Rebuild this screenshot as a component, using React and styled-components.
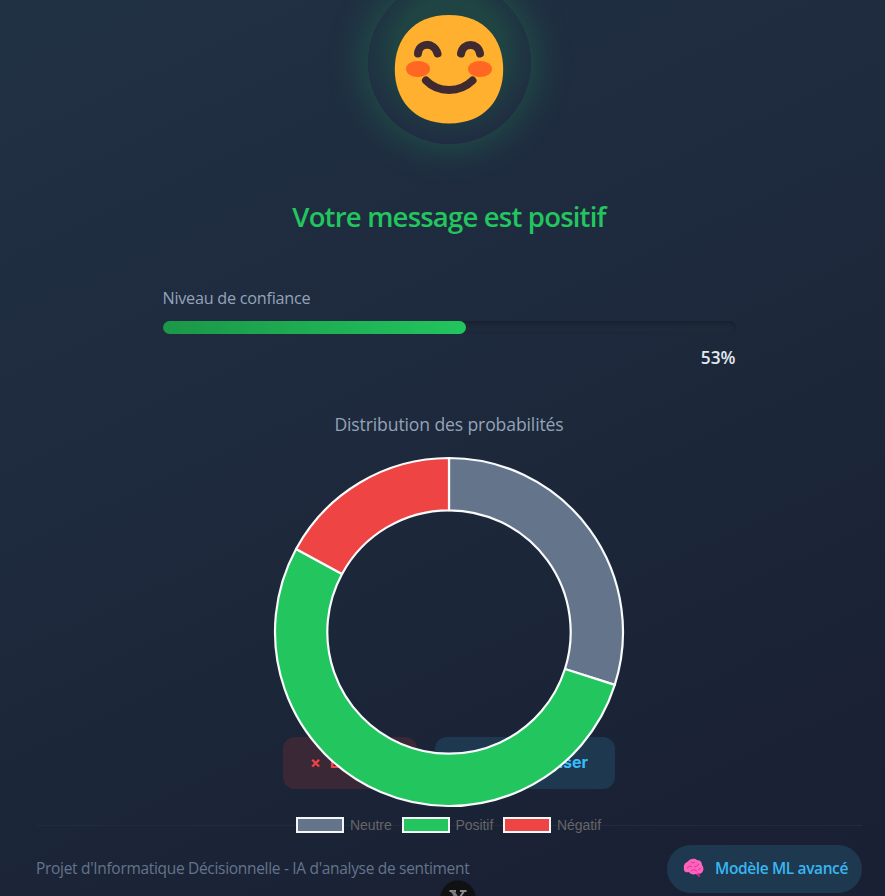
import React from 'react';
import styled, { createGlobalStyle } from 'styled-components';

const Global = createGlobalStyle`
  * { box-sizing: border-box; }
  html, body { margin: 0; }
  body { width: 885px; height: 896px; overflow: hidden; background: #1a2033; font-family: "Open Sans", "Noto Sans", sans-serif; }
`;
const Page = styled.main`
  height: 896px;
  overflow: hidden;
  display: flex;
  flex-direction: column;
  padding: 0 23px 0 36px;
  background: linear-gradient(155deg, #213144 0%, #1f2c40 30%, #1c2639 62%, #1a2135 85%, #192033 100%);
`;
const Halo = styled.div`
  width: 163px;
  height: 163px;
  flex: none;
  margin: -19px auto 0;
  border-radius: 50%;
  box-shadow: 0 0 40px rgba(34, 197, 94, .3);
`;
const Face = styled.svg`
  display: block;
  width: 163px;
  height: 163px;
  border-radius: 50%;
`;
const Title = styled.h1`
  flex: none;
  margin: 53px auto 0;
  height: 40px;
  line-height: 40px;
  font-size: 27.5px;
  font-weight: 600;
  letter-spacing: -0.8px;
  white-space: nowrap;
  color: #22c55e;
`;
const Confidence = styled.section`
  flex: none;
  width: 573px;
  margin: 48px auto 0;
`;
const Label = styled.div`
  height: 26px;
  line-height: 26px;
  font-size: 16.2px;
  letter-spacing: -0.25px;
  color: #94a3b8;
`;
const Track = styled.div`
  height: 13px;
  margin-top: 10px;
  border-radius: 7px;
  background: #1e293a;
  box-shadow: inset 0 2px 4px rgba(0, 0, 0, .25);
`;
const Fill = styled.div`
  height: 13px;
  border-radius: 7px;
  background: linear-gradient(90deg, #1b9748, #22c55e);
`;
const Percent = styled.div`
  margin-top: 11px;
  height: 26px;
  line-height: 26px;
  text-align: right;
  font-size: 17.3px;
  font-weight: 600;
  color: #e2e8f0;
`;
const ChartTitle = styled.h2`
  flex: none;
  margin: 41px auto 0;
  height: 26px;
  line-height: 24px;
  font-size: 17.6px;
  font-weight: 400;
  letter-spacing: -0.13px;
  white-space: nowrap;
  color: #94a3b8;
`;
const ChartArea = styled.div`
  position: relative;
  flex: none;
  height: 299px;
`;
const Chart = styled.svg`
  position: absolute;
  z-index: 1;
  left: 237px;
  top: 18px;
  width: 352px;
  height: 352px;
`;
const Legend = styled.div`
  position: absolute;
  z-index: 1;
  top: 378px;
  left: 260px;
  display: flex;
  gap: 8px;
`;
const LegendItem = styled.div`
  display: flex;
  align-items: center;
  gap: 6px;
  width: ${p => p.$width}px;
  height: 18px;
  font: 14px "Liberation Sans", Arial, sans-serif;
  letter-spacing: -0.05px;
  color: #666;
  white-space: nowrap;
`;
const Swatch = styled.span`
  flex: none;
  width: 48px;
  height: 16px;
  border: 2px solid #f4f6f8;
  background: ${p => p.$color};
`;
const Actions = styled.div`
  flex: none;
  display: flex;
  justify-content: center;
  gap: 18px;
`;
const Button = styled.button`
  width: ${p => p.$width}px;
  height: 52px;
  display: flex;
  align-items: center;
  justify-content: ${p => p.$justify};
  gap: 9px;
  padding: 0 27px 2px;
  border: 0;
  border-radius: 12px;
  font: 700 16px Inter, sans-serif;
  white-space: nowrap;
  color: ${p => p.$color};
  background: ${p => p.$bg};
`;
const Footer = styled.footer`
  flex: none;
  height: 80px;
  margin-top: 36px;
  padding-top: 19px;
  display: flex;
  justify-content: space-between;
  border-top: 1px solid #222b3d;
`;
const Credit = styled.span`
  height: 48px;
  line-height: 46px;
  font-size: 15.5px;
  letter-spacing: -0.31px;
  white-space: nowrap;
  color: #64748b;
`;
const Badge = styled.div`
  width: 195px;
  height: 48px;
  padding: 0 0 2px 16px;
  display: flex;
  align-items: center;
  gap: 11px;
  border-radius: 24px;
  background: #1e3850;
  color: #38b6f0;
  font-size: 15.5px;
  font-weight: 600;
  letter-spacing: -0.38px;
  white-space: nowrap;
`;
const Bubble = styled.svg`
  position: absolute;
  left: 439px;
  top: 879px;
  width: 38px;
  height: 17px;
`;

const slices = [
  ['Neutre', '#64748b', 0, 107.7, 97.5],
  ['Positif', '#22c55e', 107.7, 298.5, 93.5],
  ['Négatif', '#ef4444', 298.5, 360, 100],
];
const point = (r, deg) => {
  const a = (deg * Math.PI) / 180;
  return `${176 + r * Math.sin(a)} ${176 - r * Math.cos(a)}`;
};
const arc = (from, to) => {
  const large = to - from > 180 ? 1 : 0;
  return `M${point(174, from)}A174 174 0 ${large} 1 ${point(174, to)}L${point(121.7, to)}A121.7 121.7 0 ${large} 0 ${point(121.7, from)}Z`;
};

function Smiley() {
  return (
    <Face viewBox="0 0 163 163">
      <defs>
        <radialGradient id="glow" cx="50%" cy="44%" r="56%">
          <stop offset=".58" stopColor="#1f4443" />
          <stop offset=".78" stopColor="#1f3742" />
          <stop offset="1" stopColor="#202c42" />
        </radialGradient>
      </defs>
      <circle cx="81.500" cy="81.500" r="81.500" fill="url(#glow)" />
      <path d="M81 142.500C117 142.500 135.200 118.200 135.200 88.300S117 34 81 34 26.800 58.400 26.800 88.300 45 142.500 81 142.500Z" fill="#ffb02e" />
      <ellipse cx="50" cy="88" rx="12" ry="8" fill="#ff6723" />
      <ellipse cx="112" cy="88" rx="12" ry="8" fill="#ff6723" />
      <path d="M50 72.500C51 61.500 66 60.500 69.500 72.500M93 72.500C95 61 110 61 112 72.500M58 99.500C70 112 92 112 104.500 99.500" fill="none" stroke="#402a32" strokeWidth="8" strokeLinecap="round" />
    </Face>
  );
}
function Brain() {
  return (
    <svg width="21" height="20" viewBox="0 0 21 20">
      <path d="M1 10C0 7 3 4 5 3.500 7 0 12 0 14 2 18 2 19 5 19 7 22 11 20 15 16 16L16.500 19 13 16C10 17 7 16 6 14 3 15 0 13 1 10Z" fill="#ff64bd" />
      <path d="M4 10Q6 7 9 9M8 4Q10 6 12 4M11 9Q14 9 16 6M8 13Q11 10 14 13M15 12L18 10" fill="none" stroke="#e51c93" strokeWidth=".8" />
      <path d="M13 16L16.500 19V15Z" fill="#f50f98" />
    </svg>
  );
}
function Close() {
  return (
    <Bubble viewBox="0 0 38 17">
      <circle cx="19" cy="19" r="18" fill="#151820" />
      <circle cx="19" cy="19" r="17" fill="#101112" />
      <path d="M10.500 12H17M21 12H27.500M13 12L22 26M25 12L16 26" fill="none" stroke="#8b8b8b" strokeWidth="2" />
      <path d="M13.500 12L22.500 26" stroke="#777" strokeWidth="3.500" />
    </Bubble>
  );
}

export default function App() {
  return (
    <>
      <Global />
      <Page>
        <Halo><Smiley /></Halo>
        <Title>Votre message est positif</Title>
        <Confidence>
          <Label>Niveau de confiance</Label>
          <Track><Fill style={{ width: '53%' }} /></Track>
          <Percent>53%</Percent>
        </Confidence>
        <ChartTitle>Distribution des probabilités</ChartTitle>
        <ChartArea>
          <Chart viewBox="0 0 352 352">
            {slices.map(([name, color, from, to]) => (
              <path key={name} d={arc(from, to)} fill={color} stroke="#f8fafc" strokeWidth="2.200" strokeLinejoin="round" />
            ))}
          </Chart>
          <Legend>
            {slices.map(([name, color, , , width]) => (
              <LegendItem key={name} $width={width}><Swatch $color={color} />{name}</LegendItem>
            ))}
          </Legend>
        </ChartArea>
        <Actions>
          <Button $width={134} $justify="flex-start" $color="#ef4444" $bg="#3b2837"><span>×</span><span>Effacer</span></Button>
          <Button $width={180} $justify="flex-end" $color="#38bdf8" $bg="#1e3850"><span>↻</span><span>Réinitialiser</span></Button>
        </Actions>
        <Footer>
          <Credit>Projet d'Informatique Décisionnelle - IA d'analyse de sentiment</Credit>
          <Badge><Brain />Modèle ML avancé</Badge>
        </Footer>
      </Page>
      <Close />
    </>
  );
}
